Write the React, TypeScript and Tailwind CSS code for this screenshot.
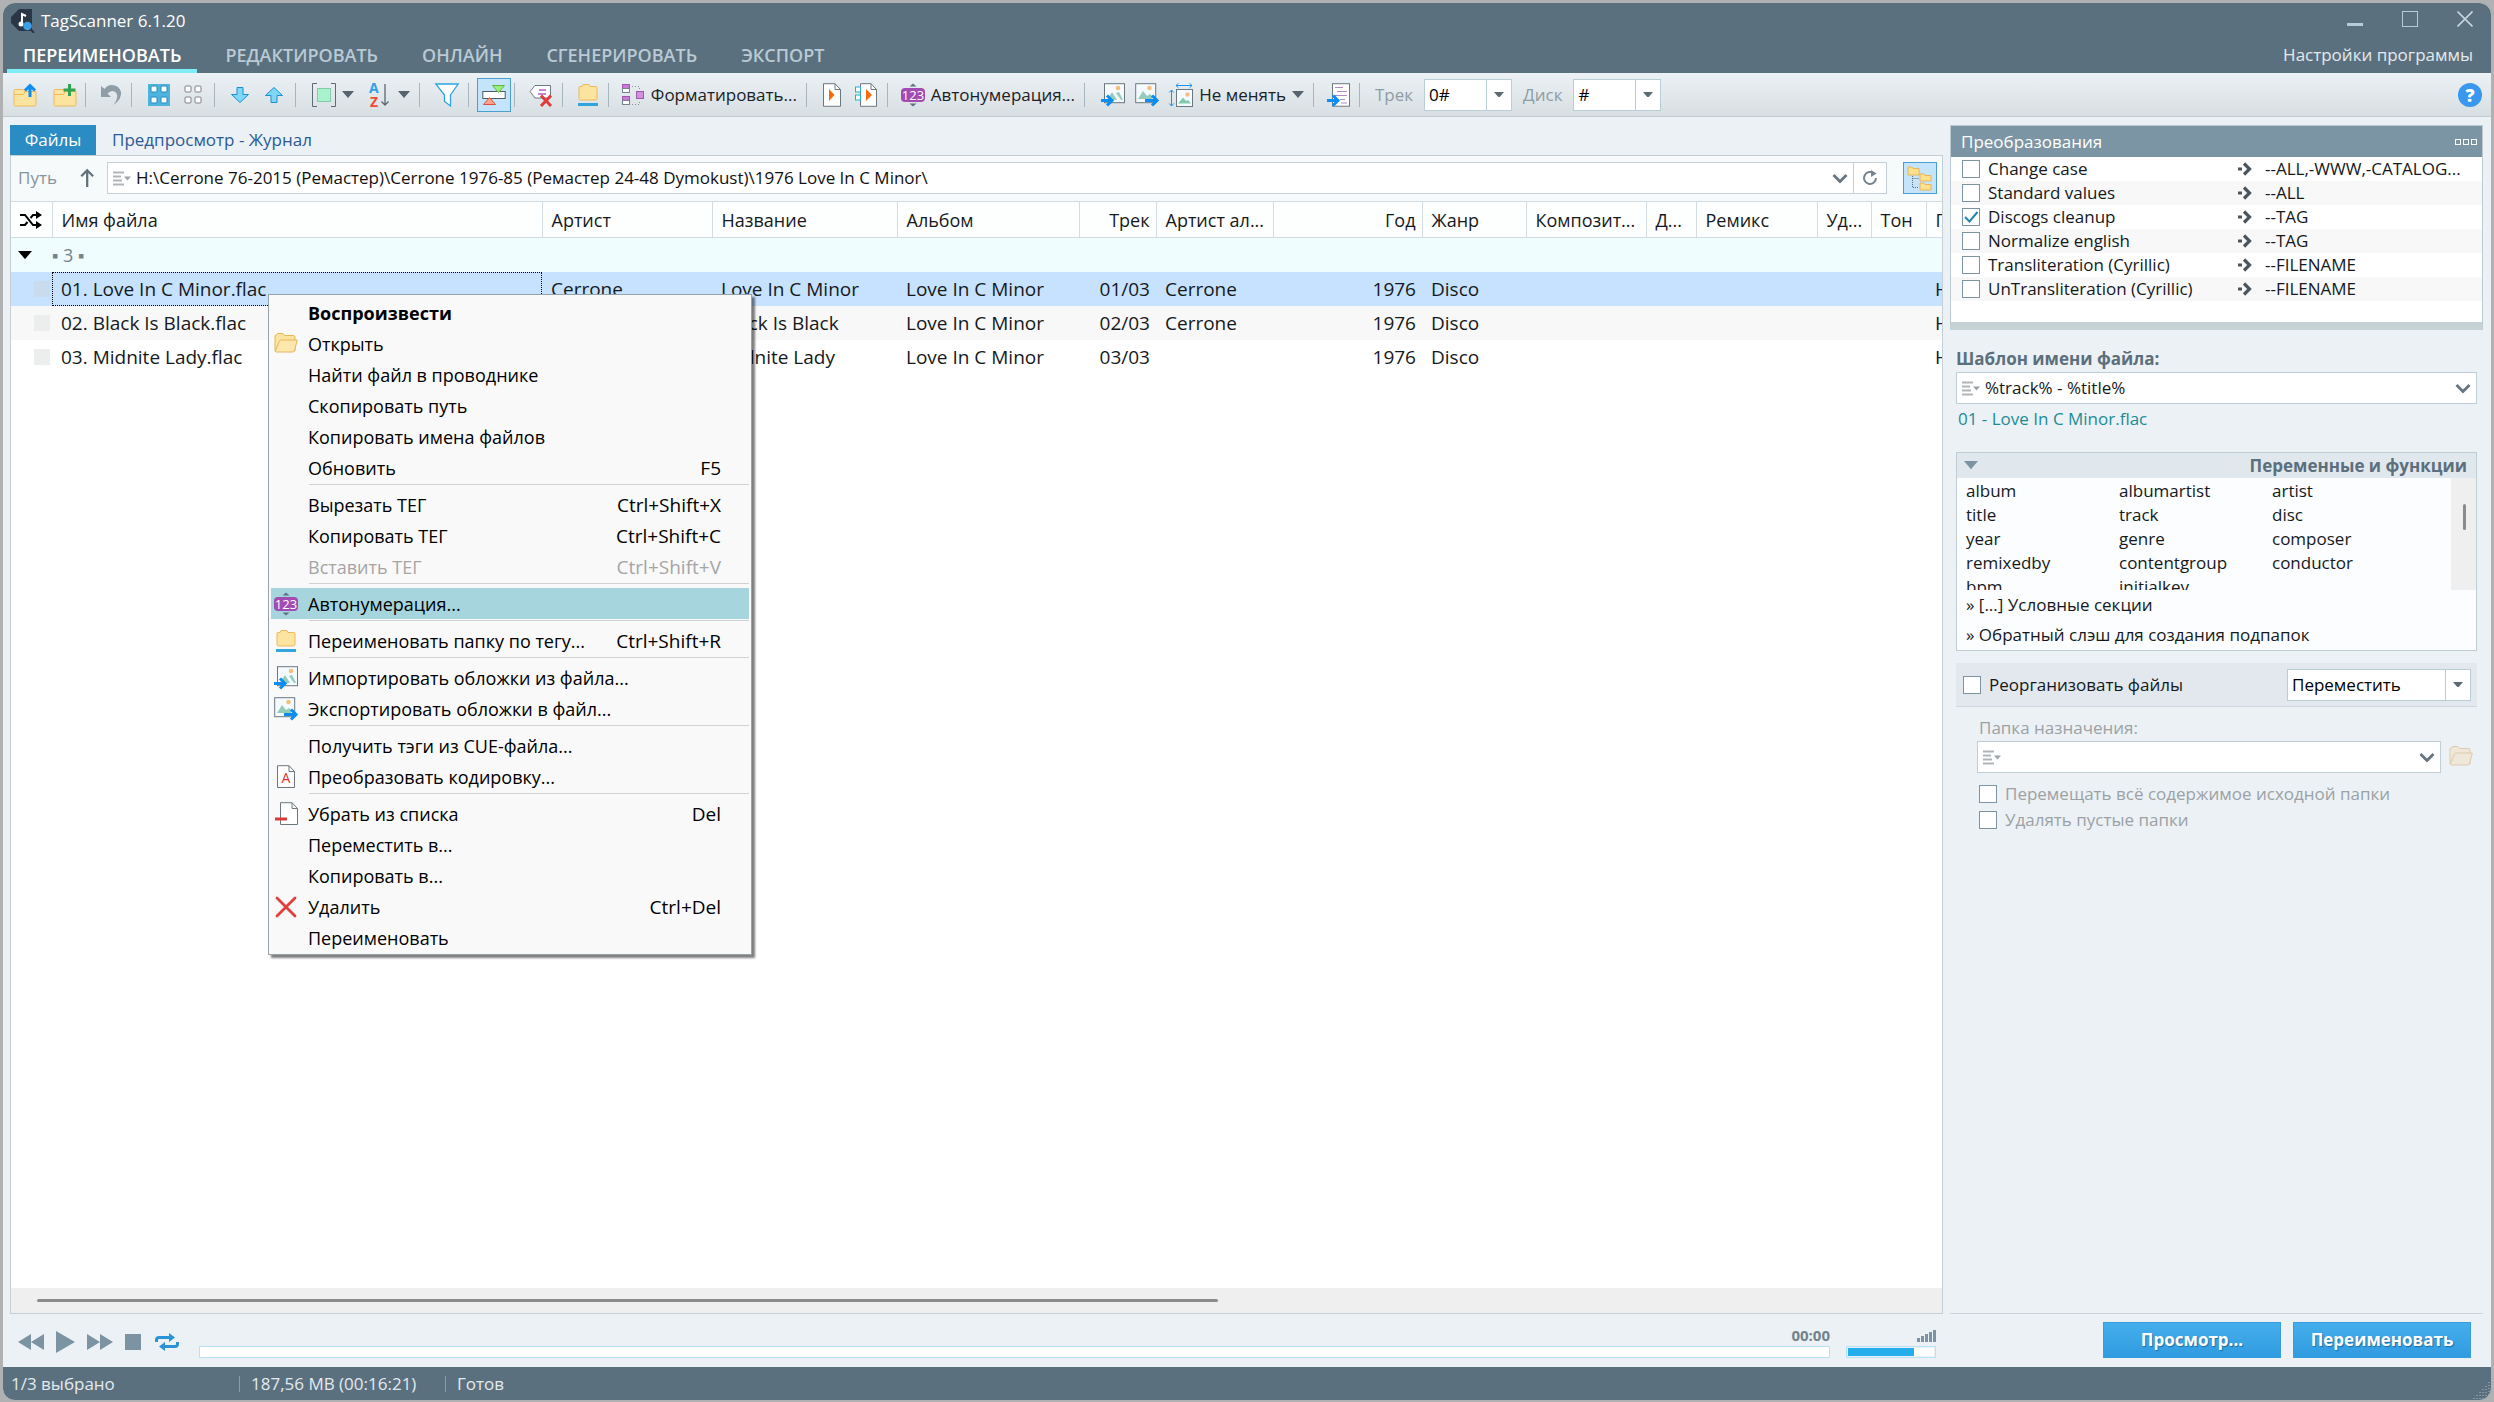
import { Fragment, type ReactNode } from 'react';
import { clsx } from 'clsx';

interface IconProps {
  children: ReactNode;
  className?: string;
}

const Icon = ({ children, className }: IconProps) => (
  <svg viewBox="0 0 24 24" fill="none" aria-hidden="true" className={clsx('size-6 shrink-0 overflow-visible', className)}>
    {children}
  </svg>
);

/* ---------- Icons ---------- */

const FolderBody = () => (
  <path
    d="M1 7.5V21.5Q1 23 2.5 23H21.5Q23 23 23 21.5V8.5H12L10.5 6.5H3Q1 6.5 1 7.5ZM1 11.5H10.5L12 8.5"
    fill="#fbe3a0"
    stroke="#edb95e"
  />
);

const FolderUpIcon = () => (
  <Icon>
    <FolderBody />
    <path d="M17 14V3M12 7.5 17 2.5 22 7.5" stroke="#0a8df5" strokeWidth="3" />
  </Icon>
);

const FolderAddIcon = () => (
  <Icon>
    <FolderBody />
    <path d="M16.5 1V13M10.5 7H22.5" stroke="#2fa351" strokeWidth="3" />
  </Icon>
);

const UndoIcon = () => (
  <Icon>
    <path
      d="M2 3V14H12L8.5 10.5Q13 6 17 9.5Q20.5 14 14.5 22Q23 16 22 9Q20 2 12.5 2Q8.5 2 5.5 6Z"
      fill="#8f9ea6"
    />
  </Icon>
);

const gridCells = [
  [4, 3],
  [14, 3],
  [4, 14],
  [14, 14],
];

const SelectAllIcon = () => (
  <Icon>
    <rect x="1" y="1" width="22" height="22" fill="#4fb4dd" />
    {gridCells.map(([x, y]) => (
      <rect key={`${x}-${y}`} x={x} y={y} width="6" height="6" rx="1" fill="#fff" stroke="#1c8cbf" />
    ))}
  </Icon>
);

const SelectNoneIcon = () => (
  <Icon>
    {gridCells.map(([x, y]) => (
      <rect key={`${x}-${y}`} x={x} y={y} width="6" height="6" rx="1" fill="#fff" stroke="#7d8287" />
    ))}
  </Icon>
);

const MoveDownIcon = () => (
  <Icon>
    <path d="M9 4.5H15V11.5H20.5L12 19.5 3.5 11.5H9Z" fill="#7fd6f7" stroke="#1b8fd1" />
  </Icon>
);

const MoveUpIcon = () => (
  <Icon>
    <path d="M9 19.5H15V12.5H20.5L12 4.5 3.5 12.5H9Z" fill="#7fd6f7" stroke="#1b8fd1" />
  </Icon>
);

const BracketsIcon = () => (
  <Icon>
    <path d="M5 .5H.5V23.5H5M19 .5H23.5V23.5H19" stroke="#5f6a72" />
    <rect x="5.5" y="5.5" width="13" height="13" fill="#a9f2cc" stroke="#86c9ab" />
  </Icon>
);

const SortIcon = () => (
  <Icon>
    <text x="1" y="10" fontSize="14" fontWeight="700" fill="#2f9fe8">
      A
    </text>
    <text x="2" y="24" fontSize="14" fontWeight="700" fill="#ee4a36">
      Z
    </text>
    <path d="M17 1V22M13.5 18.5 17 22 20.5 18.5" stroke="#5a6872" strokeWidth="1.3" />
  </Icon>
);

const FilterIcon = () => (
  <Icon>
    <path d="M.8 1H23.2L15.5 12V23L9.5 18.5V12Z" fill="#fff" stroke="#2fa4de" strokeWidth="1.3" />
  </Icon>
);

const CompareIcon = () => (
  <Icon>
    <rect x=".8" y="8.5" width="22.4" height="7" fill="#fff" stroke="#4f5b63" />
    <path d="M10.5 2.5H22.5L16.5 9.5Z" fill="#9bf07a" stroke="#5ab93e" />
    <path d="M1.5 21.5H13.5L7.5 14.5Z" fill="#ffa38a" stroke="#dc4f3a" />
  </Icon>
);

const ClearTagIcon = () => (
  <Icon>
    <path d="M6 2.5H21.5V15H6L1 8.5Z" fill="#fff" stroke="#6d7b85" />
    <path d="M10 7H17M9 11H17" stroke="#b45cc2" strokeWidth="1.5" />
    <path d="M12 12.5 22 23M22 12.5 12 23" stroke="#e03c38" strokeWidth="3" />
  </Icon>
);

const FolderUnderlineIcon = () => (
  <Icon>
    <path
      d="M3 4.5Q3 3.5 4 3.5H6L7 1.5H13L14 3.5H20Q21 3.5 21 4.5V15.5Q21 17 19.5 17H4.5Q3 17 3 15.5Z"
      fill="#fbe3a0"
      stroke="#edb95e"
    />
    <rect x="2" y="20" width="20" height="3" fill="#33a5dc" />
  </Icon>
);

const FormatIcon = () => (
  <Icon>
    <rect x="1.5" y="1.5" width="7" height="4" fill="#c77bd6" stroke="#9f56ae" />
    <rect x="1.5" y="5.5" width="7" height="4" fill="#fff" stroke="#77838b" />
    <rect x="1.5" y="13.5" width="7" height="4" fill="#c77bd6" stroke="#9f56ae" />
    <rect x="1.5" y="17.5" width="7" height="4" fill="#fff" stroke="#77838b" />
    <rect x="15.5" y="8.5" width="7" height="7" fill="#cf92db" stroke="#9f56ae" />
    <path d="M11 3.5H18.5V7M11 21.5H18.5V17" stroke="#8b8f99" strokeDasharray="1 2" />
  </Icon>
);

const PlayDocIcon = () => (
  <Icon>
    <path d="M3.5.7H15L20.5 6.5V23.3H3.5Z" fill="#fff" stroke="#6b7880" />
    <path d="M15 .7V6.5H20.5" stroke="#6b7880" />
    <path d="M9 6 14.5 12 9 18Z" fill="#f56a0c" />
  </Icon>
);

const PlayDocListIcon = () => (
  <Icon>
    <path d="M6.5.7H17L22.5 6.5V23.3H6.5Z" fill="#fff" stroke="#6b7880" />
    <path d="M17 .7V6.5H22.5" stroke="#6b7880" />
    <path d="M12 6 18 12 12 18Z" fill="#f56a0c" />
    <rect x="1.5" y="4" width="5" height="5" fill="#fff" stroke="#22b0cf" />
    <rect x="1.5" y="12" width="5" height="5" fill="#fff" stroke="#22b0cf" />
  </Icon>
);

const NumberIcon = () => (
  <Icon>
    <path d="M8.5 3.5 12 .5 15.5 3.5ZM8.5 20.5 12 23.5 15.5 20.5Z" fill="#5b7282" />
    <rect x="0" y="5" width="24" height="14" rx="4" fill="#a24bb3" />
    <text x="12" y="16.5" fontSize="13" fill="#fff" textAnchor="middle">
      123
    </text>
  </Icon>
);

const ImportCoverIcon = () => (
  <Icon>
    <rect x="3.5" y=".7" width="20" height="19" fill="#f6faff" stroke="#6b7880" />
    <circle cx="17" cy="5" r="2.3" fill="#f1c27a" />
    <path d="M7 15 11 9 16 17H20L15 10 18 9 22 17H12Z" fill="#93cdb9" />
    <path d="M0 17.5H10M6 12.5 11 17.5 6 22.5" stroke="#0a8df5" strokeWidth="3" />
  </Icon>
);

const ExportCoverIcon = () => (
  <Icon>
    <rect x=".7" y=".7" width="20" height="19" fill="#f6faff" stroke="#6b7880" />
    <circle cx="14.5" cy="5" r="2.3" fill="#f1c27a" />
    <path d="M3 16 8 8 12 13 15 11 17 13V16Z" fill="#93cdb9" />
    <path d="M10 17.5H21M17 12.5 22 17.5 17 22.5" stroke="#0a8df5" strokeWidth="3" />
  </Icon>
);

const ResizeCoverIcon = () => (
  <Icon>
    <rect x="7.5" y="6.5" width="16" height="17" fill="#f6faff" stroke="#6b7880" />
    <circle cx="18.5" cy="11.5" r="2.2" fill="#f5bd83" />
    <path d="M9 20.5 14 14.5 17 18 19 17 22 20.5Z" fill="#7fc9ad" />
    <path d="M7 2.5H23M9.5.2 7 2.5 9.5 4.8M20.5.2 23 2.5 20.5 4.8" stroke="#1d93ee" />
    <path d="M2.5 7V23M.2 9.5 2.5 7 4.8 9.5M.2 20.5 2.5 23 4.8 20.5" stroke="#1d93ee" />
  </Icon>
);

const ImportTextIcon = () => (
  <Icon>
    <rect x="5.5" y=".7" width="17" height="22.5" fill="#fff" stroke="#6b7880" />
    <path d="M8 4.5H16M10 8.5H20M8 12.5H20M13 16.5H18M14 20H20" stroke="#b28bc4" strokeWidth="1.2" />
    <path d="M0 17.5H10M6 12.5 11 17.5 6 22.5" stroke="#0a8df5" strokeWidth="3" />
  </Icon>
);

const OpenFolderIcon = ({ faded }: { faded?: boolean }) => (
  <Icon className={faded ? 'opacity-70' : undefined}>
    <path
      d="M1 4Q1 3 2 3L4 1.5H9L10.5 3.5H19.5Q21 3.5 21 5V19H1Z"
      fill={faded ? '#efe4cf' : '#fbe3a0'}
      stroke={faded ? '#d9b98c' : '#e6b65c'}
    />
    <path
      d="M5.5 9Q6 8 7 8H23.3L20.5 18.5Q20 20 18.5 20H2.5Q1 20 1.5 18.5Z"
      fill={faded ? '#efe4cf' : '#fde7ad'}
      stroke={faded ? '#d9b98c' : '#e6b65c'}
    />
  </Icon>
);

const EncodingIcon = () => (
  <Icon>
    <path d="M3.5.7H15L20.5 6.5V22.5H3.5Z" fill="#fff" stroke="#6b7880" />
    <path d="M15 .7V6.5H20.5" stroke="#6b7880" />
    <text x="12" y="18" fontSize="14" fill="#e0352f" textAnchor="middle">
      A
    </text>
  </Icon>
);

const RemoveIcon = () => (
  <Icon>
    <path d="M6.5.7H18L23.5 6.5V22.5H6.5Z" fill="#fff" stroke="#6b7880" />
    <path d="M18 .7V6.5H23.5" stroke="#6b7880" />
    <path d="M1 17H13" stroke="#d93b3b" strokeWidth="3" />
  </Icon>
);

const DeleteIcon = () => (
  <Icon>
    <path d="M3 3 21 21M21 3 3 21" stroke="#e0403c" strokeWidth="2.8" strokeLinecap="round" />
  </Icon>
);

const Caret = ({ className }: { className?: string }) => (
  <svg viewBox="0 0 12 7" aria-hidden="true" className={clsx('w-3 shrink-0', className)}>
    <path d="M0 0H12L6 7Z" fill="currentColor" />
  </svg>
);

const Chevron = () => (
  <svg viewBox="0 0 16 11" fill="none" aria-hidden="true" className="w-4 shrink-0">
    <path d="M1.5 2 8 8.5 14.5 2" stroke="#66757f" strokeWidth="2.8" />
  </svg>
);

const HistoryIcon = () => (
  <svg viewBox="0 0 18 15" aria-hidden="true" className="w-[18px] shrink-0">
    <path d="M0 .5H11V2.5H0ZM0 4.5H8V6.5H0ZM0 8.5H9V10.5H0ZM0 12.5H11V14.5H0Z" fill="#b0b5b9" />
    <path d="M11 5.5H18L14.5 9.5Z" fill="#9aa3a9" />
  </svg>
);

const TargetArrow = () => (
  <svg viewBox="0 0 14 14" fill="none" aria-hidden="true" className="w-[14px]">
    <path d="M0 7H4" stroke="#4c565c" strokeWidth="3" />
    <path d="M6 1.5 11.5 7 6 12.5" stroke="#4c565c" strokeWidth="3.2" />
  </svg>
);

/* ---------- Data ---------- */

const tabs = ['ПЕРЕИМЕНОВАТЬ', 'РЕДАКТИРОВАТЬ', 'ОНЛАЙН', 'СГЕНЕРИРОВАТЬ', 'ЭКСПОРТ'];

const columns = [
  { title: 'Имя файла', width: 'w-[490px]' },
  { title: 'Артист', width: 'w-[170px]' },
  { title: 'Название', width: 'w-[185px]' },
  { title: 'Альбом', width: 'w-[182px]' },
  { title: 'Трек', width: 'w-[77px]', right: true },
  { title: 'Артист ал...', width: 'w-[117px]' },
  { title: 'Год', width: 'w-[149px]', right: true },
  { title: 'Жанр', width: 'w-[104px]' },
  { title: 'Композит...', width: 'w-[120px]' },
  { title: 'Д...', width: 'w-[50px]' },
  { title: 'Ремикс', width: 'w-[121px]' },
  { title: 'Уд...', width: 'w-[54px]' },
  { title: 'Тон', width: 'w-[55px]' },
  { title: 'Путь', width: '' },
];

const path = 'H:\\Cerrone 76-2015 (Ремастер)\\Cerrone 1976-85 (Ремастер 24-48 Dymokust)\\1976 Love In C Minor\\';

const files = [
  ['01. Love In C Minor.flac', 'Cerrone', 'Love In C Minor', 'Love In C Minor', '01/03', 'Cerrone'],
  ['02. Black Is Black.flac', 'Cerrone', 'Black Is Black', 'Love In C Minor', '02/03', 'Cerrone'],
  ['03. Midnite Lady.flac', 'Cerrone', 'Midnite Lady', 'Love In C Minor', '03/03', ''],
].map((row) => [...row, '1976', 'Disco', '', '', '', '', '', path]);

interface MenuItem {
  label: string;
  shortcut?: string;
  icon?: ReactNode;
  bold?: boolean;
  disabled?: boolean;
  active?: boolean;
}

const menu: MenuItem[][] = [
  [
    { label: 'Воспроизвести', bold: true },
    { label: 'Открыть', icon: <OpenFolderIcon /> },
    { label: 'Найти файл в проводнике' },
    { label: 'Скопировать путь' },
    { label: 'Копировать имена файлов' },
    { label: 'Обновить', shortcut: 'F5' },
  ],
  [
    { label: 'Вырезать ТЕГ', shortcut: 'Ctrl+Shift+X' },
    { label: 'Копировать ТЕГ', shortcut: 'Ctrl+Shift+C' },
    { label: 'Вставить ТЕГ', shortcut: 'Ctrl+Shift+V', disabled: true },
  ],
  [{ label: 'Автонумерация...', icon: <NumberIcon />, active: true }],
  [{ label: 'Переименовать папку по тегу...', shortcut: 'Ctrl+Shift+R', icon: <FolderUnderlineIcon /> }],
  [
    { label: 'Импортировать обложки из файла...', icon: <ImportCoverIcon /> },
    { label: 'Экспортировать обложки в файл...', icon: <ExportCoverIcon /> },
  ],
  [{ label: 'Получить тэги из CUE-файла...' }, { label: 'Преобразовать кодировку...', icon: <EncodingIcon /> }],
  [
    { label: 'Убрать из списка', shortcut: 'Del', icon: <RemoveIcon /> },
    { label: 'Переместить в...' },
    { label: 'Копировать в...' },
    { label: 'Удалить', shortcut: 'Ctrl+Del', icon: <DeleteIcon /> },
    { label: 'Переименовать' },
  ],
];

const transforms = [
  { name: 'Change case', target: '--ALL,-WWW,-CATALOG...' },
  { name: 'Standard values', target: '--ALL' },
  { name: 'Discogs cleanup', target: '--TAG', checked: true },
  { name: 'Normalize english', target: '--TAG' },
  { name: 'Transliteration (Cyrillic)', target: '--FILENAME' },
  { name: 'UnTransliteration (Cyrillic)', target: '--FILENAME' },
];

const variables = [
  'album',
  'albumartist',
  'artist',
  'title',
  'track',
  'disc',
  'year',
  'genre',
  'composer',
  'remixedby',
  'contentgroup',
  'conductor',
  'bpm',
  'initialkey',
];

/* ---------- Building blocks ---------- */

interface CheckProps {
  label: string;
  checked?: boolean;
  disabled?: boolean;
}

const Check = ({ label, checked, disabled }: CheckProps) => (
  <label className={clsx('flex items-center gap-2', disabled && 'text-[#9ba1a5]')}>
    <span className="relative flex">
      <input
        type="checkbox"
        defaultChecked={checked}
        disabled={disabled}
        className="peer size-[18px] appearance-none border border-[#7d93a1] bg-white"
      />
      <svg
        viewBox="0 0 18 18"
        fill="none"
        aria-hidden="true"
        className="pointer-events-none absolute inset-0 hidden peer-checked:block"
      >
        <path d="M3 9 7.5 13.5 15.5 4" stroke="#1f86b8" strokeWidth="2" />
      </svg>
    </span>
    {label}
  </label>
);

interface DropDownProps {
  id: string;
  value: string;
  label?: string;
  className: string;
}

const DropDown = ({ id, value, label, className }: DropDownProps) => (
  <div className={clsx('relative flex h-8 border border-[#b9cdd6] bg-white text-black', className)}>
    <select id={id} aria-label={label} className="w-full appearance-none bg-transparent pl-1 outline-none">
      <option>{value}</option>
    </select>
    <span className="pointer-events-none absolute inset-y-0 right-0 flex w-[25px] items-center justify-center border-l border-[#b9cdd6] text-[#5c6a72]">
      <Caret className="w-[10px]" />
    </span>
  </div>
);

interface ToolGroupProps {
  children: ReactNode;
  className: string;
}

const ToolGroup = ({ children, className }: ToolGroupProps) => (
  <div className={clsx('flex h-6 items-center justify-end border-r border-[#a9b5bd]', className)}>{children}</div>
);

interface ToolButtonProps {
  name: string;
  children: ReactNode;
}

const ToolButton = ({ name, children }: ToolButtonProps) => (
  <button type="button" aria-label={name} className="flex items-center gap-[6px]">
    {children}
  </button>
);

/* ---------- Sections ---------- */

const TitleBar = () => (
  <header className="flex h-[70px] justify-between bg-[#5b707e] text-[#e3eaee]">
    <div className="flex flex-col justify-between">
      <div className="flex h-9 items-center gap-[6px] pl-2 text-white">
        <svg viewBox="0 0 24 24" aria-hidden="true" className="size-6">
          <path d="M8 0H21V22H8L0 14V8Z" fill="#2b3746" />
          <path d="M11 15V5L15 7" fill="none" stroke="#fff" strokeWidth="2" />
          <circle cx="10" cy="15" r="2.5" fill="#fff" />
          <circle cx="16.5" cy="17" r="4.3" fill="#3ba0e6" />
          <path d="M19.5 20 23 24" stroke="#2b3746" strokeWidth="2" />
        </svg>
        TagScanner 6.1.20
      </div>
      <nav className="flex gap-3 pl-1">
        {tabs.map((tab, index) => (
          <button
            key={tab}
            type="button"
            className={clsx(
              'h-[34px] border-b-4 px-4 pt-px text-lg font-semibold leading-none',
              index === 0 ? 'border-[#7eedf5] text-white' : 'border-transparent text-[#b9cad5]',
            )}
          >
            {tab}
          </button>
        ))}
      </nav>
    </div>

    <div className="flex flex-col items-end justify-between pb-[6px] pr-[18px]">
      <div className="flex h-8 items-center gap-[39px]">
        <button type="button" aria-label="Свернуть" className="flex size-4 items-end">
          <span className="mb-px h-[3px] w-full bg-[#b8ccd8]" />
        </button>
        <button type="button" aria-label="Развернуть" className="size-4 border border-[#b8ccd8]" />
        <button type="button" aria-label="Закрыть">
          <svg viewBox="0 0 16 16" aria-hidden="true" className="size-4">
            <path d="M.5.5 15.5 15.5M15.5.5.5 15.5" stroke="#c5d5df" strokeWidth="1.6" />
          </svg>
        </button>
      </div>
      <a href="#settings">Настройки программы</a>
    </div>
  </header>
);

const Toolbar = () => (
  <div className="flex h-11 items-center border-b border-[#c0cad0] bg-linear-to-b from-[#ebf1f5] to-[#d8dfe3] pr-[9px] text-[#1b2227]">
    <ToolGroup className="w-[83px] gap-4 pr-2">
      <ToolButton name="Открыть папку">
        <FolderUpIcon />
      </ToolButton>
      <ToolButton name="Добавить папку">
        <FolderAddIcon />
      </ToolButton>
    </ToolGroup>
    <ToolGroup className="w-[46px] pr-2">
      <ToolButton name="Отменить">
        <UndoIcon />
      </ToolButton>
    </ToolGroup>
    <ToolGroup className="w-[83px] gap-[10px] pr-[9px]">
      <ToolButton name="Выделить всё">
        <SelectAllIcon />
      </ToolButton>
      <ToolButton name="Снять выделение">
        <SelectNoneIcon />
      </ToolButton>
    </ToolGroup>
    <ToolGroup className="w-[81px] gap-[10px] pr-[9px]">
      <ToolButton name="Вниз">
        <MoveDownIcon />
      </ToolButton>
      <ToolButton name="Вверх">
        <MoveUpIcon />
      </ToolButton>
    </ToolGroup>
    <ToolGroup className="w-[124px] gap-[14px] pr-[9px] text-[#56636c]">
      <ToolButton name="Выделение">
        <BracketsIcon />
        <Caret />
      </ToolButton>
      <ToolButton name="Сортировка">
        <SortIcon />
        <Caret />
      </ToolButton>
    </ToolGroup>
    <ToolGroup className="w-[49px] pr-[9px]">
      <ToolButton name="Фильтр">
        <FilterIcon />
      </ToolButton>
    </ToolGroup>
    <ToolGroup className="w-[46px] pr-[3px]">
      <button
        type="button"
        aria-label="Сравнение"
        className="flex size-[34px] shrink-0 items-center justify-center border border-[#4a9fd0] bg-[#c3e4fa]"
      >
        <CompareIcon />
      </button>
    </ToolGroup>
    <ToolGroup className="w-12 pr-[9px]">
      <ToolButton name="Очистить тег">
        <ClearTagIcon />
      </ToolButton>
    </ToolGroup>
    <ToolGroup className="w-[46px] pr-2">
      <ToolButton name="Переименовать папку">
        <FolderUnderlineIcon />
      </ToolButton>
    </ToolGroup>
    <ToolGroup className="w-[198px] pr-[9px]">
      <ToolButton name="Форматировать">
        <FormatIcon />
        Форматировать...
      </ToolButton>
    </ToolGroup>
    <ToolGroup className="w-[81px] gap-[10px] pr-[9px]">
      <ToolButton name="Воспроизвести файл">
        <PlayDocIcon />
      </ToolButton>
      <ToolButton name="Воспроизвести список">
        <PlayDocListIcon />
      </ToolButton>
    </ToolGroup>
    <ToolGroup className="w-[197px] pr-[9px]">
      <ToolButton name="Автонумерация">
        <NumberIcon />
        Автонумерация...
      </ToolButton>
    </ToolGroup>
    <ToolGroup className="w-[229px] gap-[10px] pr-[9px]">
      <ToolButton name="Импорт обложки">
        <ImportCoverIcon />
      </ToolButton>
      <ToolButton name="Экспорт обложки">
        <ExportCoverIcon />
      </ToolButton>
      <ToolButton name="Размер обложки">
        <ResizeCoverIcon />
        Не менять
        <Caret className="text-[#56636c]" />
      </ToolButton>
    </ToolGroup>
    <ToolGroup className="w-[46px] pr-2">
      <ToolButton name="Импорт из текста">
        <ImportTextIcon />
      </ToolButton>
    </ToolGroup>
    <div className="flex items-center gap-[11px] pl-[15px] text-[#8f9ca4]">
      <label htmlFor="track-format">Трек</label>
      <DropDown id="track-format" value="0#" className="w-[88px]" />
      <label htmlFor="disc-format">Диск</label>
      <DropDown id="disc-format" value="#" className="w-[88px]" />
    </div>
    <button
      type="button"
      aria-label="Справка"
      className="ml-auto flex size-6 items-center justify-center rounded-full bg-[#3a97ee] text-lg font-extrabold leading-none text-white"
    >
      ?
    </button>
  </div>
);

const PathBar = () => (
  <div className="flex h-[45px] items-center bg-[#f6fafb] pb-px pl-[7px] pr-[5px]">
    <label htmlFor="path" className="w-[61px] text-[#87949c]">
      Путь
    </label>
    <button type="button" aria-label="На уровень вверх" className="w-7">
      <svg viewBox="0 0 18 22" fill="none" aria-hidden="true" className="h-5">
        <path d="M9 21V2.5M2.5 9 9 2.5 15.5 9" stroke="#60717b" strokeWidth="2.5" />
      </svg>
    </button>
    <div className="flex h-8 grow items-center gap-[5px] border border-[#c6d0d6] bg-white px-[5px]">
      <HistoryIcon />
      <input id="path" defaultValue={path} className="grow text-[#111] outline-none" />
      <Chevron />
    </div>
    <button
      type="button"
      aria-label="Обновить"
      className="flex h-8 w-[33px] items-center justify-center border border-l-0 border-[#c6d0d6] bg-white"
    >
      <svg viewBox="0 0 18 18" fill="none" aria-hidden="true" className="size-[18px]">
        <path d="M13 4.5A6 6 0 1 0 15 9" stroke="#75838c" strokeWidth="2" />
        <path d="M10 1 15.5 4.5 10 8Z" fill="#75838c" />
      </svg>
    </button>
    <button
      type="button"
      aria-label="Дерево папок"
      className="ml-4 flex h-8 w-[34px] items-center justify-center border border-[#4a9fd0] bg-[#c3e4fa]"
    >
      <svg viewBox="0 0 26 26" fill="none" aria-hidden="true" className="size-[26px]">
        <path d="M1 2H5L6 3.5H12V10H1Z" fill="#fde08d" stroke="#e6b65c" />
        <path d="M13 9H17L18 10.5H24V16H13ZM13 18H17L18 19.5H24V25H13Z" fill="#fde08d" stroke="#e6b65c" />
        <path d="M5.5 11V22.5H12M5.5 13.5H12" stroke="#5f6a72" strokeDasharray="1 1" />
      </svg>
    </button>
  </div>
);

const FileTable = () => (
  <table className="w-full table-fixed border-collapse text-left text-[19px] leading-6 text-[#15191c]">
    <thead className="text-lg leading-6">
      <tr className="h-9 border-y border-[#d3dce1] bg-[#fdfefe]">
        <th className="w-[41px] border-r border-[#d3dce1] pl-[9px]">
          <svg viewBox="0 0 22 18" fill="none" aria-label="Порядок" className="w-[22px]">
            <path d="M0 4H5L13 14H18M0 14H5L7.5 11M10.5 7 13 4H18" stroke="#000" strokeWidth="2" />
            <path d="M16 0 22 4 16 8ZM16 10 22 14 16 18Z" fill="#000" />
          </svg>
        </th>
        {columns.map((column) => (
          <th
            key={column.title}
            className={clsx(
              'overflow-hidden whitespace-nowrap border-r border-[#d3dce1] pl-[9px] font-normal last:border-r-0',
              column.right && 'pr-[6px] text-right',
              column.width,
            )}
          >
            {column.title}
          </th>
        ))}
      </tr>
    </thead>
    <tbody>
      <tr className="h-[34px] bg-[#effdff]">
        <td className="pl-[7px]">
          <button type="button" aria-label="Свернуть группу" className="flex text-black">
            <Caret className="w-[14px]" />
          </button>
        </td>
        <td colSpan={columns.length} className="text-lg leading-6 text-[#75838c]">
          ▪ 3 ▪
        </td>
      </tr>
      {files.map((row, rowIndex) => (
        <tr key={row[0]} className={clsx('h-[34px]', rowIndex === 0 ? 'bg-[#c6e2ff]' : rowIndex === 1 && 'bg-[#f8f8f8]')}>
          <td>
            <div className={clsx('ml-auto mr-[2px] size-4', rowIndex === 0 ? 'bg-[#c8dcee]' : 'bg-[#eceeee]')} />
          </td>
          {row.map((cell, index) => (
            <td
              key={columns[index].title}
              className={clsx(
                'overflow-hidden whitespace-nowrap pl-[9px]',
                columns[index].right && 'pr-[6px] text-right',
                rowIndex === 0 && index === 0 && 'outline-1 -outline-offset-1 outline-dotted outline-black',
              )}
            >
              {cell}
            </td>
          ))}
        </tr>
      ))}
    </tbody>
  </table>
);

const ContextMenu = () => (
  <div
    role="menu"
    className="absolute left-[265px] top-[291px] w-[484px] border border-[#98a3a9] bg-[#f9f9f9] px-[2px] pb-px pt-[2px] text-lg leading-6 text-black shadow-[3px_3px_2px_rgba(0,0,0,0.5)]"
  >
    {menu.map((group, groupIndex) => (
      <Fragment key={group[0].label}>
        {groupIndex > 0 && (
          <div role="separator" className="flex h-[6px] items-start pl-[38px] pt-px">
            <div className="h-px grow bg-[#cfd3d5]" />
          </div>
        )}
        {group.map((item) => (
          <button
            key={item.label}
            type="button"
            role="menuitem"
            disabled={item.disabled}
            className={clsx(
              'flex h-[31px] w-full items-center pl-[3px] pr-[28px]',
              item.active && 'bg-[#a7d5dd]',
              item.disabled && 'text-[#a5a5a5]',
              item.bold && 'font-bold',
            )}
          >
            <span className="flex w-[34px]">{item.icon}</span>
            <span className="grow text-left">{item.label}</span>
            {item.shortcut && <span className="text-[19px]">{item.shortcut}</span>}
          </button>
        ))}
      </Fragment>
    ))}
  </div>
);

const Transforms = () => (
  <section className="border border-[#bccbd3] border-b-8 border-b-[#c5d3d7] bg-white">
    <h2 className="flex h-[31px] items-center justify-between bg-[#7b95a4] pl-[10px] pr-[5px] text-white">
      Преобразования
      <button type="button" aria-label="Настроить" className="flex gap-[2px]">
        <span className="size-[6px] border border-white" />
        <span className="size-[6px] border border-white" />
        <span className="size-[6px] border border-white" />
      </button>
    </h2>
    <ul className="pb-[21px]">
      {transforms.map((item) => (
        <li key={item.name} className="flex h-6 items-center pl-[11px] even:bg-[#f8f8f8]">
          <div className="w-[276px]">
            <Check label={item.name} checked={item.checked} />
          </div>
          <TargetArrow />
          <span className="pl-[13px]">{item.target}</span>
        </li>
      ))}
    </ul>
  </section>
);

const SidePanel = () => (
  <aside className="flex w-[533px] shrink-0 flex-col border-b border-[#ccd6dc] text-[#15191c]">
    <Transforms />
    <div className="flex flex-col px-[6px] pt-4">
      <label htmlFor="template" className="h-[26px] font-bold leading-[26px] text-[#5b6f7c]">
        Шаблон имени файла:
      </label>
      <div className="flex h-8 items-center gap-[5px] border border-[#bfcdd5] bg-white px-[5px]">
        <HistoryIcon />
        <input id="template" defaultValue="%track% - %title%" className="grow outline-none" />
        <Chevron />
      </div>
      <p className="h-12 pl-[2px] pt-[3px] leading-6 text-[#1b8c95]">01 - Love In C Minor.flac</p>

      <section className="border border-[#bfcdd5] bg-[#fbfdfe]">
        <h3 className="flex h-[25px] items-center justify-between bg-[#e1e8ed] pl-[7px] pr-[9px] font-bold text-[#5b6f7c]">
          <Caret className="w-[14px] text-[#7b93a2]" />
          Переменные и функции
        </h3>
        <div className="flex h-28 overflow-hidden">
          <ul className="grid grow auto-rows-[24px] grid-cols-[153px_153px_1fr] pl-[9px] pt-px leading-6">
            {variables.map((name) => (
              <li key={name}>{name}</li>
            ))}
          </ul>
          <div className="w-[25px] bg-[#efefef] pl-3 pt-[26px]">
            <div className="h-[26px] w-[3px] rounded bg-[#8b8b8b]" />
          </div>
        </div>
        <p className="h-[30px] pl-[9px] leading-[30px]">» [...] Условные секции</p>
        <p className="h-[30px] pl-[9px] leading-[30px]">» Обратный слэш для создания подпапок</p>
      </section>

      <div className="mt-3 flex h-11 items-center justify-between border-b border-[#cfd8de] bg-[#e2e8ed] pl-[7px] pr-[6px]">
        <Check label="Реорганизовать файлы" />
        <DropDown id="reorganize-mode" label="Режим" value="Переместить" className="w-[184px]" />
      </div>

      <div className="flex flex-col pl-[21px] pt-2 text-[#9ba1a5]">
        <label htmlFor="target-folder" className="h-[26px] pl-[2px] leading-[26px]">
          Папка назначения:
        </label>
        <div className="flex items-center gap-2 pr-1">
          <div className="flex h-8 grow items-center gap-[5px] border border-[#bfcdd5] bg-white px-[5px]">
            <HistoryIcon />
            <input id="target-folder" disabled className="grow" />
            <Chevron />
          </div>
          <button type="button" aria-label="Обзор">
            <OpenFolderIcon faded />
          </button>
        </div>
        <div className="flex flex-col pl-[2px] pt-[9px]">
          <div className="h-[26px]">
            <Check label="Перемещать всё содержимое исходной папки" disabled />
          </div>
          <div className="h-[26px]">
            <Check label="Удалять пустые папки" disabled />
          </div>
        </div>
      </div>
    </div>
  </aside>
);

const sliderClass =
  'h-3 appearance-none border border-[#b5e2f6] [&::-webkit-slider-thumb]:size-0 [&::-webkit-slider-thumb]:appearance-none';

const PlayerBar = () => (
  <div className="flex h-[53px] items-start pl-[15px] pr-[14px]">
    <div className="flex items-center gap-3 pt-[17px] text-[#7b93a2]">
      <button type="button" aria-label="Назад">
        <svg viewBox="0 0 26 16" aria-hidden="true" className="w-[26px]">
          <path d="M13 0V16L0 8ZM26 0V16L13 8Z" fill="currentColor" />
        </svg>
      </button>
      <button type="button" aria-label="Воспроизвести">
        <svg viewBox="0 0 19 22" aria-hidden="true" className="w-[19px]">
          <path d="M0 0 19 11 0 22Z" fill="currentColor" />
        </svg>
      </button>
      <button type="button" aria-label="Вперёд">
        <svg viewBox="0 0 26 16" aria-hidden="true" className="w-[26px]">
          <path d="M0 0 13 8 0 16ZM13 0 26 8 13 16Z" fill="currentColor" />
        </svg>
      </button>
      <button type="button" aria-label="Стоп" className="size-4 bg-[#7b93a2]" />
      <button type="button" aria-label="Повтор" className="pl-[2px]">
        <svg viewBox="0 0 24 18" fill="none" aria-hidden="true" className="w-6">
          <path d="M1.5 9V7Q1.5 4.5 4 4.5H15M22.5 9V11Q22.5 13.5 20 13.5H9" stroke="#2a93d5" strokeWidth="3" />
          <path d="M14 0 20 4.5 14 9ZM10 9 4 13.5 10 18Z" fill="#2a93d5" />
        </svg>
      </button>
    </div>
    <div className="flex grow flex-col pl-5">
      <label htmlFor="position" className="h-8 self-end pt-[11px] text-[15px] font-bold leading-5 text-[#73828b]">
        00:00
      </label>
      <input id="position" type="range" defaultValue={0} className={clsx(sliderClass, 'bg-white')} />
    </div>
    <div className="flex flex-col pl-4">
      <label htmlFor="volume" aria-label="Громкость" className="flex h-8 items-end justify-end gap-px pb-1">
        <span className="h-1 w-[3px] bg-[#7b93a2]" />
        <span className="h-[6px] w-[3px] bg-[#7b93a2]" />
        <span className="h-2 w-[3px] bg-[#7b93a2]" />
        <span className="h-[10px] w-[3px] bg-[#7b93a2]" />
        <span className="h-3 w-[3px] bg-[#7b93a2]" />
      </label>
      <input
        id="volume"
        type="range"
        defaultValue={77}
        className={clsx(
          sliderClass,
          'w-[90px] bg-white bg-[linear-gradient(90deg,#24aeec_77%,#ffffff_77%)] bg-origin-content bg-clip-content p-px',
        )}
      />
    </div>
  </div>
);

const actionClass =
  'h-9 w-[178px] border border-[#379de0] bg-linear-to-b from-[#45aeec] to-[#2f9be0] font-bold text-white [text-shadow:1px_1px_1px_rgba(0,60,110,0.5)]';

const StatusBar = () => (
  <footer className="flex h-[33px] items-center bg-[#5b707e] pl-2 text-[#e3eaee]">
    <span className="w-[228px]">1/3 выбрано</span>
    <span className="flex h-4 w-[206px] items-center border-l border-[#8b9ca7] pl-[11px]">187,56 MB (00:16:21)</span>
    <span className="flex h-4 items-center border-l border-[#8b9ca7] pl-[11px]">Готов</span>
    <svg viewBox="0 0 20 20" aria-hidden="true" className="ml-auto size-5 self-end">
      <path
        d="M18 2V20M15 6V20M12 9V20M9 12V20M6 15V20M3 18V20"
        stroke="#a9b9c3"
        strokeWidth="1"
        strokeDasharray="1 2"
      />
    </svg>
  </footer>
);

const App = () => (
  <div className="flex min-h-screen flex-col bg-[#b0b1b3] px-[3px] pb-[2px] pt-[3px] font-['Open_Sans','Noto_Sans',sans-serif] text-[17px] leading-6">
    <div className="relative flex grow flex-col overflow-hidden rounded-xl bg-[#ecf1f5]">
      <TitleBar />
      <Toolbar />
      <div className="flex grow gap-[7px] pl-[7px] pr-2 pt-2">
        <main className="flex min-w-0 grow flex-col">
          <div className="flex h-[30px]">
            <button type="button" className="w-[86px] bg-[#2b8cc4] text-white">
              Файлы
            </button>
            <button type="button" className="px-4 text-[#2b5a94]">
              Предпросмотр - Журнал
            </button>
          </div>
          <div className="flex grow flex-col overflow-hidden border border-[#c5ced4] bg-white">
            <PathBar />
            <FileTable />
            <div className="mt-auto h-[25px] bg-[#efefef] pl-[26px] pt-[11px]">
              <div className="h-[3px] w-[62%] rounded bg-[#8b8b8b]" />
            </div>
          </div>
        </main>
        <SidePanel />
      </div>
      <div className="flex">
        <div className="min-w-0 grow">
          <PlayerBar />
        </div>
        <div className="flex w-[541px] justify-end gap-3 pr-[20px] pt-2">
          <button type="button" className={actionClass}>
            Просмотр...
          </button>
          <button type="button" className={actionClass}>
            Переименовать
          </button>
        </div>
      </div>
      <StatusBar />
      <ContextMenu />
    </div>
  </div>
);

export default App;
